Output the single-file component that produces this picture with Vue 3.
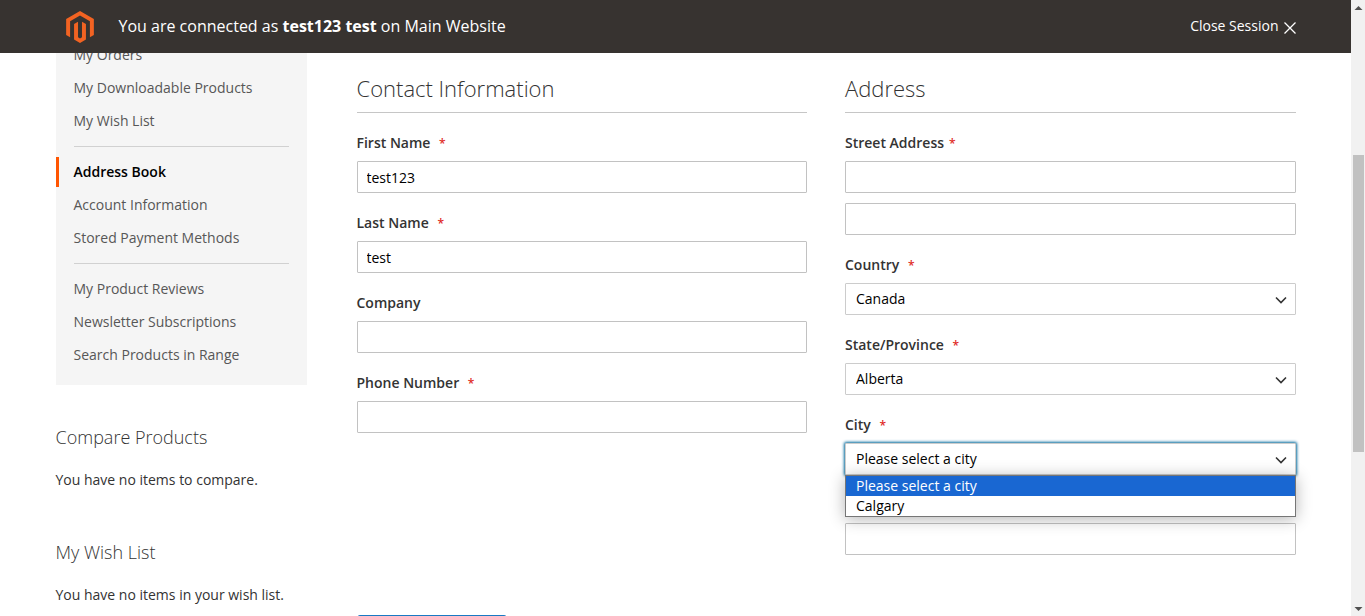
<script setup>
import { ref } from 'vue'

const navGroups = [
  [{ label: 'My Orders' }, { label: 'My Downloadable Products' }, { label: 'My Wish List' }],
  [{ label: 'Address Book', current: true }, { label: 'Account Information' }, { label: 'Stored Payment Methods' }],
  [{ label: 'My Product Reviews' }, { label: 'Newsletter Subscriptions' }, { label: 'Search Products in Range' }],
]

const sideBlocks = [
  { title: 'Compare Products', text: 'You have no items to compare.' },
  { title: 'My Wish List', text: 'You have no items in your wish list.' },
]

const contactFields = ref([
  { id: 'firstname', label: 'First Name', required: true, value: 'test123' },
  { id: 'lastname', label: 'Last Name', required: true, value: 'test' },
  { id: 'company', label: 'Company', required: false, value: '' },
  { id: 'telephone', label: 'Phone Number', required: true, value: '' },
])

const cities = ['Please select a city', 'Calgary']

const selects = ref([
  { id: 'country', label: 'Country', value: 'Canada', options: ['Canada'] },
  { id: 'region', label: 'State/Province', value: 'Alberta', options: ['Alberta'] },
  { id: 'city', label: 'City', value: cities[0], options: cities, open: true },
])

const street = ref(['', ''])
const postcode = ref('')
</script>

<template>
  <div class="window">
    <div class="page">
      <header class="session-bar">
        <div class="container session-inner">
          <svg class="logo" viewBox="1.6 0 20.8 24" aria-hidden="true">
            <path d="M12 24l-4.455-2.573V9.717l2.97-1.713v11.714l1.486.87 1.484-.87V8.004l2.971 1.713v11.71L12 24zM22.391 6v11.999l-2.969 1.714V7.714L12 3.43 4.574 7.714v12.001L1.609 18V6L12 0l10.391 6z" />
          </svg>
          <p class="session-text">You are connected as <strong>test123 test</strong> on Main Website</p>
          <a class="session-close" href="#">
            <span>Close Session</span>
            <svg viewBox="0 0 12 12" aria-hidden="true"><path d="M.5.5l11 11M11.5.5l-11 11" /></svg>
          </a>
        </div>
      </header>

      <main class="container columns">
        <aside class="sidebar">
          <nav class="account-nav">
            <template v-for="(group, g) in navGroups" :key="g">
              <hr v-if="g > 0" class="delimiter" />
              <a
                v-for="item in group"
                :key="item.label"
                href="#"
                class="nav-link"
                :class="{ current: item.current }"
              >{{ item.label }}</a>
            </template>
          </nav>
          <section v-for="block in sideBlocks" :key="block.title" class="side-block">
            <h2>{{ block.title }}</h2>
            <p>{{ block.text }}</p>
          </section>
        </aside>

        <form class="address-form" @submit.prevent>
          <div class="form-columns">
            <section class="fieldset">
              <h2 class="legend">Contact Information</h2>
              <div v-for="field in contactFields" :key="field.id" class="field">
                <label :for="field.id">{{ field.label }} <span v-if="field.required" class="star">*</span></label>
                <input :id="field.id" v-model="field.value" type="text" class="control" />
              </div>
            </section>

            <section class="fieldset">
              <h2 class="legend">Address</h2>
              <div class="field">
                <label for="street1">Street Address<span class="star">*</span></label>
                <div class="street-lines">
                  <input id="street1" v-model="street[0]" type="text" class="control" />
                  <input v-model="street[1]" type="text" class="control" aria-label="Street Address Line 2" />
                </div>
              </div>
              <div v-for="field in selects" :key="field.id" class="field">
                <label :for="field.id">{{ field.label }} <span class="star">*</span></label>
                <div class="select-wrap">
                  <select :id="field.id" v-model="field.value" class="control" :class="{ focused: field.open }">
                    <option v-for="option in field.options" :key="option">{{ option }}</option>
                  </select>
                  <svg class="chevron" viewBox="0 0 12 8" aria-hidden="true"><path d="M1 1.5l5 5 5-5" /></svg>
                  <ul v-if="field.open" class="popup" role="listbox" aria-label="City">
                    <li
                      v-for="option in field.options"
                      :key="option"
                      role="option"
                      :aria-selected="option === field.value"
                    >{{ option }}</li>
                  </ul>
                </div>
              </div>
              <div class="field postcode">
                <input v-model="postcode" type="text" class="control" aria-label="Zip/Postal Code" />
              </div>
            </section>
          </div>
          <button type="submit" class="save" aria-label="Save Address"></button>
        </form>
      </main>
    </div>

    <div class="scrollbar" aria-hidden="true">
      <svg viewBox="0 0 14 14"><path d="M3.5 10h8L7.5 6z" /></svg>
      <div class="track">
        <div class="thumb"></div>
      </div>
      <svg viewBox="0 0 14 14"><path d="M3.5 5h8l-4 4z" /></svg>
    </div>
  </div>
</template>

<style>
body {
  margin: 0;
  overflow: hidden;
}
</style>

<style scoped>
.window {
  display: grid;
  grid-template-columns: minmax(0, 1fr) 14px;
  height: 100vh;
  overflow: hidden;
  background: #fff;
  color: #333;
  font: 14px/20px "Open Sans", "Noto Sans", sans-serif;
}

.window * {
  box-sizing: border-box;
}

.page {
  position: relative;
  overflow: hidden;
}

.container {
  max-width: 1280px;
  margin: 0 auto;
  padding: 0 20px;
}

h2,
p,
ul {
  margin: 0;
  padding: 0;
}

a {
  text-decoration: none;
}

/* Session bar */
.session-bar {
  position: absolute;
  top: 0;
  left: 0;
  right: 0;
  z-index: 5;
  background: #373330;
  color: #fff;
}

.session-inner {
  display: flex;
  align-items: center;
  height: 53px;
}

.logo {
  width: 28px;
  height: 32px;
  margin: 0 25px 0 10px;
  fill: #f26322;
}

.session-text {
  flex: 1;
  padding-bottom: 2px;
  font-size: 16px;
}

.session-text strong {
  font-weight: 700;
}

.session-close {
  display: flex;
  align-items: flex-end;
  gap: 5px;
  color: #fff;
}

.session-close span {
  padding-bottom: 1px;
}

.session-close svg {
  width: 12px;
  height: 12px;
  margin-bottom: 3px;
  fill: none;
  stroke: #fff;
  stroke-width: 1.3;
}

/* Columns */
.columns {
  display: grid;
  grid-template-columns: 251px minmax(0, 1fr);
  gap: 50px;
}

.account-nav {
  display: flex;
  flex-direction: column;
  gap: 3px;
  padding: 40px 0 15px;
  background: #f5f5f5;
}

.nav-link {
  padding: 5px 18px 5px 15px;
  border-left: 3px solid transparent;
  color: #575757;
}

.nav-link.current {
  border-color: #ff5501;
  color: #000;
  font-weight: 600;
}

.delimiter {
  height: 1px;
  margin: 7px 18px;
  border: 0;
  background: #d1d1d1;
}

.side-block {
  margin-top: 50px;
}

.account-nav + .side-block {
  margin-top: 40px;
}

.side-block h2 {
  margin-bottom: 20px;
  font-size: 18px;
  font-weight: 300;
  line-height: 25px;
}

/* Form */
.form-columns {
  display: grid;
  grid-template-columns: repeat(2, minmax(0, 1fr));
  gap: 38px;
  padding-top: 76px;
}

.legend {
  margin-bottom: 20px;
  padding-bottom: 12px;
  border-bottom: 1px solid #c6c6c6;
  font-size: 22px;
  font-weight: 300;
  line-height: 24px;
}

.field {
  margin-bottom: 20px;
}

.field label {
  display: block;
  margin-bottom: 8px;
  font-weight: 600;
}

.star {
  margin-left: 5px;
  color: #e02b27;
  font-size: 12px;
  line-height: 1;
}

.control {
  display: block;
  width: 100%;
  height: 32px;
  margin: 0;
  padding: 0 9px;
  border: 1px solid #c2c2c2;
  border-radius: 1px;
  outline: 0;
  background: #fff;
  color: #000;
  font: inherit;
}

.street-lines {
  display: grid;
  gap: 10px;
}

.select-wrap {
  position: relative;
}

select.control {
  appearance: none;
  padding: 0 24px 0 10px;
  border-color: #ccc;
}

select.focused {
  box-shadow: 0 0 3px 1px #00699d;
}

.chevron {
  position: absolute;
  top: 13px;
  right: 9px;
  width: 12px;
  height: 8px;
  fill: none;
  stroke: #333;
  stroke-width: 1.6;
  pointer-events: none;
}

.popup {
  position: absolute;
  top: 100%;
  left: 0;
  right: 0;
  z-index: 2;
  border: 1px solid #767676;
  background: #fff;
  box-shadow: 0 2px 16px rgba(0, 0, 0, 0.3);
  color: #000;
  list-style: none;
}

.popup li {
  padding: 0 10px;
}

.popup li[aria-selected="true"] {
  background: #1967d2;
  color: #fff;
}

.postcode {
  padding-top: 28px;
}

.save {
  display: block;
  width: 150px;
  height: 32px;
  margin-top: 40px;
  border: 1px solid #1979c3;
  border-radius: 3px;
  background: #1979c3;
}

/* Scrollbar */
.scrollbar {
  display: flex;
  flex-direction: column;
  height: 100vh;
  background: #f1f1f1;
}

.scrollbar svg {
  flex: none;
  width: 14px;
  height: 14px;
  fill: #505050;
}

.track {
  display: grid;
  flex: 1;
  grid-template-rows: 141fr 297fr 150fr;
  padding: 0 1px 0 2px;
}

.thumb {
  grid-row: 2;
  background: #c1c1c1;
}
</style>
